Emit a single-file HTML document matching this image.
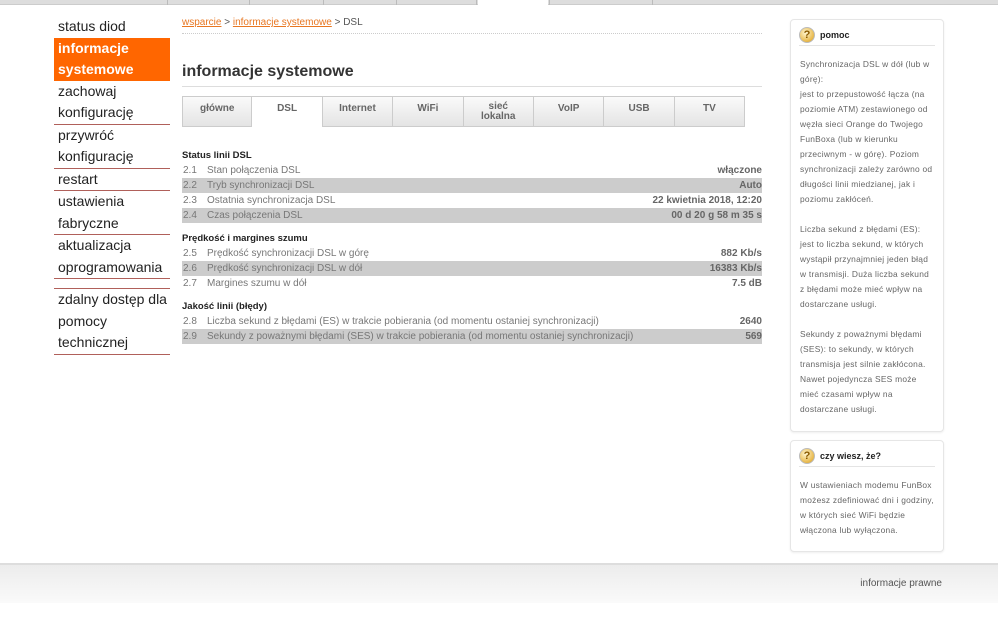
<!DOCTYPE html>
<html><head><meta charset="utf-8"><style>
*{margin:0;padding:0;box-sizing:border-box}
body{width:998px;height:624px;overflow:hidden;background:#fff;font-family:"Liberation Sans",Arial,sans-serif;position:relative;color:#333}
.top{position:absolute;left:0;top:0;width:998px;height:5px;background:#ddd;border-bottom:1px solid #ccc}
.top i{position:absolute;top:0;height:5px;border-left:1px solid #bbb}
.menu{position:absolute;left:54px;top:16px;width:116px;font-size:14px;color:#222}
.menu div{line-height:21.5px;padding-left:4px;border-bottom:1px solid #b0605a}
.menu div.nb{border-bottom:none}
.menu .act{background:#f60;color:#fff;font-weight:bold;border-bottom:none}
.bc{position:absolute;left:182px;top:17px;font-size:10px;color:#555}
.bc a{color:#e87722;text-decoration:underline}
.dot{position:absolute;left:182px;top:33px;width:580px;border-top:1px dotted #ccc}
h1{position:absolute;left:182px;top:63px;font-size:16px;font-weight:bold;color:#333}
.hl{position:absolute;left:182px;top:86px;width:580px;border-top:1px solid #ddd}
.tabs{position:absolute;left:182px;top:96px;height:31px;display:flex}
.tabs div{width:70.4px;height:31px;border:1px solid #ccc;border-left:none;background:linear-gradient(#fafafa,#e4e4e4);font-size:10px;font-weight:bold;color:#666;text-align:center;padding-top:7px;line-height:10px}
.tabs div:first-child{border-left:1px solid #ccc}
.tabs div.a{background:#fff;border-bottom:none}
.tbl{position:absolute;left:182px;top:148px;width:580px;font-size:10px}
.tbl h3{font-size:9.5px;font-weight:bold;color:#222;height:15px;line-height:15px;margin-top:0}
.r{height:15px;line-height:15px;display:flex;color:#777}
.r.g{background:#ccc}
.r b{font-weight:normal;width:25px;padding-left:1px}
.r span{flex:1}
.r em{font-style:normal;font-weight:bold;color:#666}
.box{position:absolute;left:790px;width:154px;border:1px solid #e6e6e6;border-radius:4px;background:#fff;box-shadow:0 1px 2px #eee}
.box .hd{margin:6px 8px 0 8px;border-bottom:1px solid #e4e4e4;font-size:9px;font-weight:bold;color:#222;display:flex;align-items:center;padding-bottom:2px;height:20px}
.q{width:16px;height:16px;border-radius:50%;background:radial-gradient(circle at 40% 35%,#fff6d0,#e8b84a 70%,#c08a20);border:1px solid #bbb;color:#8a5a00;font-size:11px;text-align:center;line-height:14px;margin-right:5px;font-weight:bold}
.box p{font-size:8.4px;line-height:15px;color:#666;padding:0 9px;letter-spacing:0.25px}
.foot{position:absolute;left:0;top:563px;width:998px;height:40px;border-top:2px solid #ddd;background:linear-gradient(#ececec,#fafafa)}
.foot span{position:absolute;right:56px;top:13px;font-size:10px;color:#555}
</style></head><body>
<div class="top"><i style="left:167px"></i><i style="left:249px"></i><i style="left:323px"></i><i style="left:396px"></i><i style="left:476px"></i><div style="position:absolute;left:478px;width:70px;height:6px;background:#fff"></div><i style="left:549px"></i><i style="left:652px"></i></div>
<div class="menu">
<div class="nb">status diod</div>
<div class="act">informacje<br>systemowe</div>
<div>zachowaj<br>konfigurację</div>
<div>przywróć<br>konfigurację</div>
<div>restart</div>
<div>ustawienia<br>fabryczne</div>
<div>aktualizacja<br>oprogramowania</div>
<div style="height:10px"></div>
<div>zdalny dostęp dla<br>pomocy<br>technicznej</div>
</div>
<div class="bc"><a>wsparcie</a> &gt; <a>informacje systemowe</a> &gt; DSL</div>
<div class="dot"></div>
<h1>informacje systemowe</h1>
<div class="hl"></div>
<div class="tabs"><div>główne</div><div class="a">DSL</div><div>Internet</div><div>WiFi</div><div style="padding-top:5px">sieć<br>lokalna</div><div>VoIP</div><div>USB</div><div>TV</div></div>
<div class="tbl">
<h3>Status linii DSL</h3>
<div class="r"><b>2.1</b><span>Stan połączenia DSL</span><em>włączone</em></div>
<div class="r g"><b>2.2</b><span>Tryb synchronizacji DSL</span><em>Auto</em></div>
<div class="r"><b>2.3</b><span>Ostatnia synchronizacja DSL</span><em>22 kwietnia 2018, 12:20</em></div>
<div class="r g"><b>2.4</b><span>Czas połączenia DSL</span><em>00 d 20 g 58 m 35 s</em></div>
<h3 style="margin-top:8px">Prędkość i margines szumu</h3>
<div class="r"><b>2.5</b><span>Prędkość synchronizacji DSL w górę</span><em>882 Kb/s</em></div>
<div class="r g"><b>2.6</b><span>Prędkość synchronizacji DSL w dół</span><em>16383 Kb/s</em></div>
<div class="r"><b>2.7</b><span>Margines szumu w dół</span><em>7.5 dB</em></div>
<h3 style="margin-top:8px">Jakość linii (błędy)</h3>
<div class="r"><b>2.8</b><span>Liczba sekund z błędami (ES) w trakcie pobierania (od momentu ostaniej synchronizacji)</span><em>2640</em></div>
<div class="r g"><b>2.9</b><span>Sekundy z poważnymi błędami (SES) w trakcie pobierania (od momentu ostaniej synchronizacji)</span><em>569</em></div>
</div>
<div class="box" style="top:19px;height:413px"><div class="hd"><div class="q">?</div>pomoc</div>
<p style="margin-top:11px">Synchronizacja DSL w dół (lub w górę):<br>jest to przepustowość łącza (na poziomie ATM) zestawionego od węzła sieci Orange do Twojego FunBoxa (lub w kierunku przeciwnym - w górę). Poziom synchronizacji zależy zarówno od długości linii miedzianej, jak i poziomu zakłóceń.<br><br>Liczba sekund z błędami (ES): jest to liczba sekund, w których wystąpił przynajmniej jeden błąd w transmisji. Duża liczba sekund z błędami może mieć wpływ na dostarczane usługi.<br><br>Sekundy z poważnymi błędami (SES): to sekundy, w których transmisja jest silnie zakłócona. Nawet pojedyncza SES może mieć czasami wpływ na dostarczane usługi.</p></div>
<div class="box" style="top:440px;height:112px"><div class="hd"><div class="q">?</div>czy wiesz, że?</div>
<p style="margin-top:11px">W ustawieniach modemu FunBox możesz zdefiniować dni i godziny, w których sieć WiFi będzie włączona lub wyłączona.</p></div>
<div class="foot"><span>informacje prawne</span></div>
</body></html>
